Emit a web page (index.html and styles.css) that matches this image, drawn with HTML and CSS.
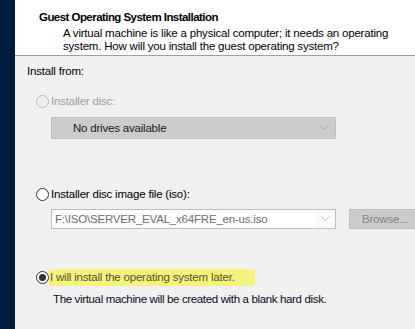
FILE: index.html
```html
<!DOCTYPE html>
<html lang="en">
<head>
  <meta charset="UTF-8">
  <title>Guest Operating System Installation</title>
  <link rel="stylesheet" href="styles.css">
</head>
<body>
  <div class="sidebar"></div>
  <div class="wizard">
    <div class="header">
      <div class="title">Guest Operating System Installation</div>
      <div class="subtitle">A virtual machine is like a physical computer; it needs an operating<br>system. How will you install the guest operating system?</div>
    </div>

    <div class="content">
      <div class="group-label">Install from:</div>

      <!-- physical drive, no drives present so disabled -->
      <label class="option disabled">
        <span class="radio"></span>
        <span class="option-text">Installer disc:</span>
      </label>
      <div class="select select-disabled">
        <span class="select-text">No drives available</span>
        <svg class="chevron" width="9" height="6" viewBox="0 0 9 6"><path d="M0.5 0.5 L4.5 4.5 L8.5 0.5" fill="none" stroke="#a6a6a6" stroke-width="1"/></svg>
      </div>

      <label class="option option-iso">
        <span class="radio"></span>
        <span class="option-text">Installer disc image file (iso):</span>
      </label>
      <div class="iso-row">
        <div class="combo">
          <span class="combo-text">F:\ISO\SERVER_EVAL_x64FRE_en-us.iso</span>
          <span class="combo-arrow">
            <svg class="chevron" width="9" height="6" viewBox="0 0 9 6"><path d="M0.5 0.5 L4.5 4.5 L8.5 0.5" fill="none" stroke="#bcbcbc" stroke-width="1"/></svg>
          </span>
        </div>
        <div class="button button-disabled">Browse...</div>
      </div>

      <label class="option option-later">
        <span class="radio checked"></span>
        <span class="option-text highlight">I will install the operating system later.</span>
      </label>
      <div class="later-note">The virtual machine will be created with a blank hard disk.</div>
    </div>
  </div>
</body>
</html>
```

FILE: styles.css
```css
body {
  margin: 0;
  padding: 0;
  display: flex;
  height: 329px;
  overflow: hidden;
  font-family: 'Liberation Sans', Arial, sans-serif;
  font-size: 11.5px;
  letter-spacing: -0.2px;
  color: #000;
  background-color: #f0f0f0;
}
.sidebar {
  width: 15px;
  flex: none;
  background-color: #001b3d;
}
.wizard {
  flex: 1;
  display: flex;
  flex-direction: column;
}
.header {
  height: 56px;
  box-sizing: border-box;
  padding: 10px 0 0 24px;
  background-color: #fff;
  border-bottom: 1px solid #a0a0a0;
}
.title {
  font-weight: bold;
  font-size: 11.5px;
  letter-spacing: -0.55px;
  line-height: 14px;
}
.subtitle {
  margin-top: 3px;
  padding-left: 24px;
  line-height: 13px;
  white-space: nowrap;
}
.content {
  padding: 8px 0 0 12px;
}
.group-label {
  line-height: 15px;
}
.option {
  display: flex;
  align-items: center;
  gap: 2px;
  margin: 15px 0 0 9px;
  line-height: 15px;
}
.option.disabled {
  color: #a0a0a0;
}
.radio {
  width: 11px;
  height: 11px;
  border: 1px solid #333;
  border-radius: 50%;
  background-color: #fff;
  position: relative;
}
.disabled .radio {
  border-color: #bcbcbc;
  background-color: #f0f0f0;
}
.radio.checked::after {
  content: "";
  position: absolute;
  left: 2px;
  top: 2px;
  width: 7px;
  height: 7px;
  border-radius: 50%;
  background-color: #333;
}
.select {
  display: flex;
  align-items: center;
  justify-content: space-between;
  width: 285px;
  height: 22px;
  box-sizing: border-box;
  margin: 8px 0 0 24px;
  padding: 0 6px 0 21px;
  background-color: #ccc;
  border: 1px solid #bfbfbf;
}
.select-text {
  color: #1a1a1a;
}
.option-iso {
  margin-top: 48px;
}
.iso-row {
  display: flex;
  margin: 7px 0 0 24px;
  gap: 13px;
}
.combo {
  display: flex;
  width: 285px;
  height: 20px;
  box-sizing: border-box;
  border: 1px solid #bdbdbd;
  background-color: #fff;
}
.combo-text {
  flex: 1;
  padding-left: 3px;
  line-height: 18px;
  color: #6d6d6d;
}
.combo-arrow {
  width: 19px;
  display: flex;
  align-items: center;
  justify-content: center;
  background-color: #fafafa;
}
.button {
  width: 75px;
  height: 20px;
  box-sizing: border-box;
  padding-left: 12px;
  line-height: 18px;
  background-color: #ccc;
  border: 1px solid #bfbfbf;
}
.button-disabled {
  color: #838383;
}
.option-later {
  margin-top: 40px;
}
.highlight {
  padding: 1px 20px 1px 1px;
  margin-left: -2px;
  background-color: #f4f47c;
  color: #55552a;
  border-radius: 2px;
}
.later-note {
  margin: 6px 0 0 26px;
  line-height: 15px;
  color: #0a0a1e;
  letter-spacing: -0.35px;
}
```
